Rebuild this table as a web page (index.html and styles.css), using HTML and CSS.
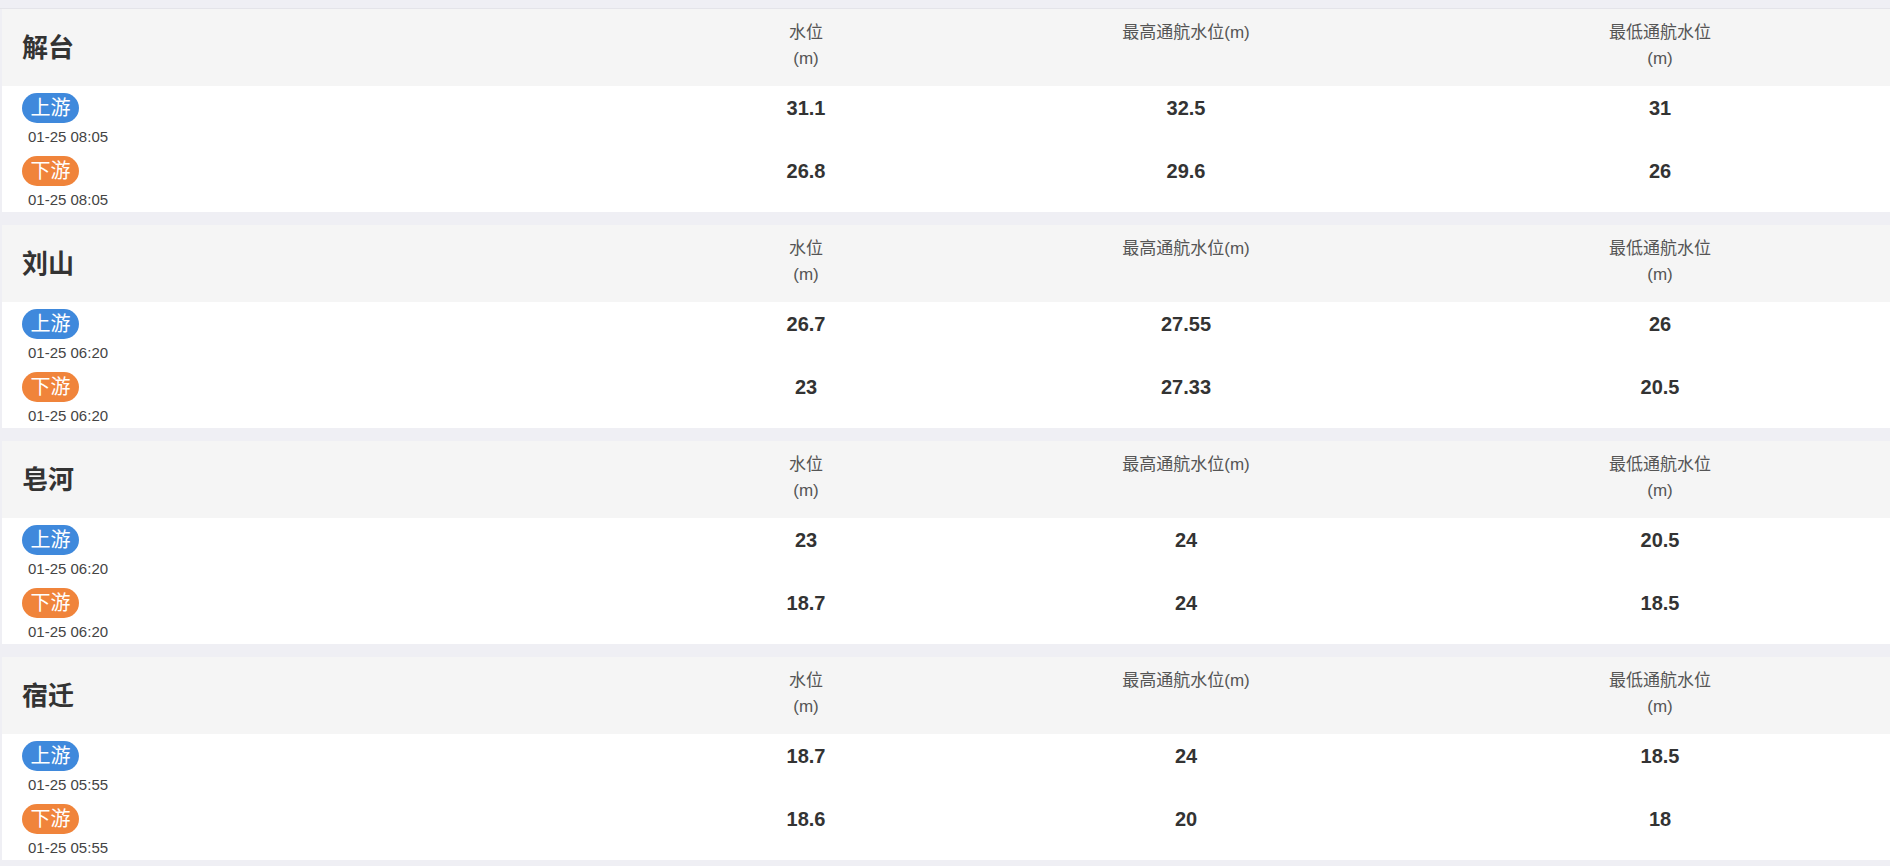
FILE: index.html
```html
<!DOCTYPE html>
<html lang="zh-CN">
<head>
<meta charset="utf-8">
<title>水位</title>
<link rel="stylesheet" href="styles.css">
</head>
<body>
<div class="topbar"></div>
<main class="list">
  <section class="station">
    <div class="st-head grid">
      <h2 class="st-name">解台</h2>
      <div class="col-label">水位<br>(m)</div>
      <div class="col-label">最高通航水位(m)</div>
      <div class="col-label">最低通航水位<br>(m)</div>
    </div>
    <div class="st-row grid">
      <div class="loc"><span class="badge up">上游</span><span class="time">01-25 08:05</span></div>
      <div class="val">31.1</div><div class="val">32.5</div><div class="val">31</div>
    </div>
    <div class="st-row grid">
      <div class="loc"><span class="badge down">下游</span><span class="time">01-25 08:05</span></div>
      <div class="val">26.8</div><div class="val">29.6</div><div class="val">26</div>
    </div>
  </section>
  <section class="station">
    <div class="st-head grid">
      <h2 class="st-name">刘山</h2>
      <div class="col-label">水位<br>(m)</div>
      <div class="col-label">最高通航水位(m)</div>
      <div class="col-label">最低通航水位<br>(m)</div>
    </div>
    <div class="st-row grid">
      <div class="loc"><span class="badge up">上游</span><span class="time">01-25 06:20</span></div>
      <div class="val">26.7</div><div class="val">27.55</div><div class="val">26</div>
    </div>
    <div class="st-row grid">
      <div class="loc"><span class="badge down">下游</span><span class="time">01-25 06:20</span></div>
      <div class="val">23</div><div class="val">27.33</div><div class="val">20.5</div>
    </div>
  </section>
  <section class="station">
    <div class="st-head grid">
      <h2 class="st-name">皂河</h2>
      <div class="col-label">水位<br>(m)</div>
      <div class="col-label">最高通航水位(m)</div>
      <div class="col-label">最低通航水位<br>(m)</div>
    </div>
    <div class="st-row grid">
      <div class="loc"><span class="badge up">上游</span><span class="time">01-25 06:20</span></div>
      <div class="val">23</div><div class="val">24</div><div class="val">20.5</div>
    </div>
    <div class="st-row grid">
      <div class="loc"><span class="badge down">下游</span><span class="time">01-25 06:20</span></div>
      <div class="val">18.7</div><div class="val">24</div><div class="val">18.5</div>
    </div>
  </section>
  <section class="station">
    <div class="st-head grid">
      <h2 class="st-name">宿迁</h2>
      <div class="col-label">水位<br>(m)</div>
      <div class="col-label">最高通航水位(m)</div>
      <div class="col-label">最低通航水位<br>(m)</div>
    </div>
    <div class="st-row grid">
      <div class="loc"><span class="badge up">上游</span><span class="time">01-25 05:55</span></div>
      <div class="val">18.7</div><div class="val">24</div><div class="val">18.5</div>
    </div>
    <div class="st-row grid">
      <div class="loc"><span class="badge down">下游</span><span class="time">01-25 05:55</span></div>
      <div class="val">18.6</div><div class="val">20</div><div class="val">18</div>
    </div>
  </section>
</main>
</body>
</html>
```

FILE: styles.css
```css
html, body {
  margin: 0;
  padding: 0;
}
body {
  background: #efeff4;
  font-family: "Liberation Sans", "Noto Sans CJK SC", sans-serif;
  color: #333;
  overflow: hidden;
}
.topbar {
  height: 8px;
  border-bottom: 1px solid #e4e4e9;
}
.list {
  padding-left: 2px;
  display: flex;
  flex-direction: column;
  gap: 13px;
}
.station {
  background: #fff;
}
.grid {
  display: grid;
  grid-template-columns: 668px 272px 488px 1fr;
}
.st-head {
  background: #f5f5f5;
  height: 77px;
}
.st-name {
  margin: 0;
  padding-left: 20px;
  font-size: 26px;
  font-weight: bold;
  line-height: 30px;
  align-self: center;
  color: #333;
}
.col-label {
  text-align: center;
  font-size: 17px;
  line-height: 26px;
  color: #555;
  padding-top: 11px;
}
.st-row {
  padding: 7px 0 2px;
}
.loc {
  padding-left: 20px;
  display: flex;
  flex-direction: column;
  align-items: flex-start;
}
.badge {
  display: block;
  width: 57px;
  height: 30px;
  line-height: 30px;
  text-align: center;
  border-radius: 15px;
  color: #fff;
  font-size: 20px;
}
.badge.up {
  background: #3f89dc;
}
.badge.down {
  background: #f0843b;
}
.time {
  margin: 4px 0 0 6px;
  font-size: 15px;
  line-height: 20px;
  color: #444;
}
.val {
  text-align: center;
  font-size: 20px;
  font-weight: bold;
  line-height: 30px;
  color: #333;
}
```
